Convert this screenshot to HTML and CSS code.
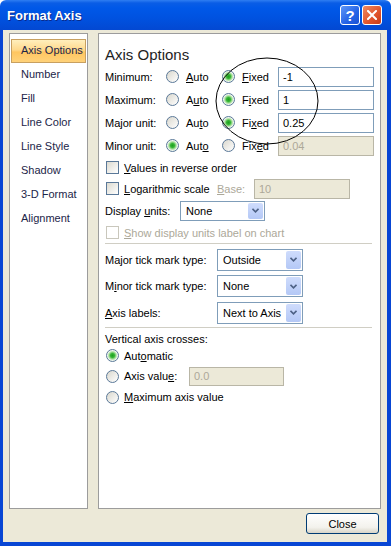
FILE: index.html
```html
<!DOCTYPE html>
<html>
<head>
    <meta charset="UTF-8">
    <title>Format Axis</title>
    <link rel="stylesheet" href="styles.css">
</head>
<body>
<div class="window">
    <div class="titlebar">
        <span class="title">Format Axis</span>
        <div class="title-buttons">
            <span class="tb-btn tb-help">?</span>
            <span class="tb-btn tb-close">
                <svg width="10" height="10" viewBox="0 0 10 10"><path d="M1 1 L9 9 M9 1 L1 9" stroke="#fff" stroke-width="2" stroke-linecap="square"/></svg>
            </span>
        </div>
    </div>

    <div class="client">
        <div class="panes">
            <ul class="nav">
                <li class="active">Axis Options</li>
                <li>Number</li>
                <li>Fill</li>
                <li>Line Color</li>
                <li>Line Style</li>
                <li>Shadow</li>
                <li>3-D Format</li>
                <li>Alignment</li>
            </ul>

            <div class="options">
                <h3>Axis Options</h3>

                <div class="bounds">
                    <span>Minimum:</span>
                    <span class="opt"><span class="radio"></span><u>A</u>uto</span>
                    <span class="opt"><span class="radio on"></span><u>F</u>ixed</span>
                    <span class="field">-1</span>

                    <span>Maximum:</span>
                    <span class="opt"><span class="radio"></span>A<u>u</u>to</span>
                    <span class="opt"><span class="radio on"></span>F<u>i</u>xed</span>
                    <span class="field">1</span>

                    <span>Major unit:</span>
                    <span class="opt"><span class="radio"></span>Au<u>t</u>o</span>
                    <span class="opt"><span class="radio on"></span>Fi<u>x</u>ed</span>
                    <span class="field">0.25</span>

                    <span>Minor unit:</span>
                    <span class="opt"><span class="radio on"></span>Aut<u>o</u></span>
                    <span class="opt"><span class="radio"></span>Fix<u>e</u>d</span>
                    <span class="field off">0.04</span>
                </div>

                <div class="check-row">
                    <span class="box"></span><span><u>V</u>alues in reverse order</span>
                </div>
                <div class="check-row">
                    <span class="box"></span><span class="log-lbl"><u>L</u>ogarithmic scale</span>
                    <span class="base-lbl"><u>B</u>ase:</span>
                    <span class="field off base">10</span>
                </div>
                <div class="units-row">
                    <span class="units-lbl">Display <u>u</u>nits:</span>
                    <span class="select units-sel">None<span class="drop"><svg width="7" height="5" viewBox="0 0 7 5"><path d="M0.5 0.8 L3.5 3.8 L6.5 0.8" fill="none" stroke="#4d6185" stroke-width="1.6"/></svg></span></span>
                </div>
                <div class="check-row disabled">
                    <span class="box"></span><span><u>S</u>how display units label on chart</span>
                </div>

                <div class="sep"></div>

                <div class="tick-row first">
                    <span class="tick-lbl">Ma<u>j</u>or tick mark type:</span>
                    <span class="select tick-sel">Outside<span class="drop"><svg width="7" height="5" viewBox="0 0 7 5"><path d="M0.5 0.8 L3.5 3.8 L6.5 0.8" fill="none" stroke="#4d6185" stroke-width="1.6"/></svg></span></span>
                </div>
                <div class="tick-row short">
                    <span class="tick-lbl">M<u>i</u>nor tick mark type:</span>
                    <span class="select tick-sel">None<span class="drop"><svg width="7" height="5" viewBox="0 0 7 5"><path d="M0.5 0.8 L3.5 3.8 L6.5 0.8" fill="none" stroke="#4d6185" stroke-width="1.6"/></svg></span></span>
                </div>
                <div class="tick-row">
                    <span class="tick-lbl"><u>A</u>xis labels:</span>
                    <span class="select tick-sel">Next to Axis<span class="drop"><svg width="7" height="5" viewBox="0 0 7 5"><path d="M0.5 0.8 L3.5 3.8 L6.5 0.8" fill="none" stroke="#4d6185" stroke-width="1.6"/></svg></span></span>
                </div>

                <div class="sep lower"></div>

                <div class="cross-title">Vertical axis crosses:</div>
                <div class="cross-row auto-row">
                    <span class="radio on"></span><span>Aut<u>o</u>matic</span>
                </div>
                <div class="cross-row value-row">
                    <span class="radio"></span><span class="value-lbl">Axis valu<u>e</u>:</span>
                    <span class="field off value">0.0</span>
                </div>
                <div class="cross-row max-row">
                    <span class="radio"></span><span><u>M</u>aximum axis value</span>
                </div>

                <!-- hand drawn circle round the fixed values -->
                <svg class="mark" width="106" height="90" viewBox="0 0 106 90">
                    <ellipse cx="53" cy="45" rx="51" ry="43" fill="none" stroke="#000" stroke-width="1"/>
                </svg>
            </div>
        </div>

        <div class="footer">
            <button class="btn-close">Close</button>
        </div>
    </div>
</div>
</body>
</html>
```

FILE: styles.css
```css
/* base */
body {
    margin: 0;
    background: #ffffff;
    font-family: "Liberation Sans", Arial, sans-serif;
    font-size: 11px;
    color: #000000;
}

.window {
    width: 391px;
    height: 546px;
    display: flex;
    flex-direction: column;
}

/* title bar */
.titlebar {
    height: 30px;
    flex: none;
    display: flex;
    align-items: center;
    justify-content: space-between;
    padding: 0 9px 0 7px;
    background: linear-gradient(#2f7ef2 0, #0a5de6 3px, #0058e8 8px, #0052e0 60%, #0348d2 100%);
    border-radius: 6px 6px 0 0;
}

.title {
    color: #ffffff;
    font-weight: bold;
    font-size: 13px;
    text-shadow: 1px 1px 0 #0a2a8a;
}

.title-buttons {
    display: flex;
    gap: 2px;
}

.tb-btn {
    width: 20px;
    height: 20px;
    box-sizing: border-box;
    border: 1px solid #ffffff;
    border-radius: 3px;
    display: flex;
    align-items: center;
    justify-content: center;
    color: #ffffff;
    font-weight: bold;
    font-size: 15px;
}

.tb-help {
    background: linear-gradient(135deg, #5d97f7, #2563e6 60%, #1a50d4);
}

.tb-close {
    background: linear-gradient(135deg, #ef8a62, #e0532b 60%, #c63c1a);
}

/* dialog body */
.client {
    flex: 1;
    background: #ece9d8;
    border-left: 3px solid #0846d4;
    border-right: 4px solid #0846d4;
    border-bottom: 4px solid #0846d4;
    padding: 3px 6px 0 6px;
}

.panes {
    display: flex;
    gap: 10px;
    height: 476px;
}

.nav {
    list-style: none;
    margin: 0;
    width: 80px;
    box-sizing: border-box;
    padding: 5px 1px 0 1px;
    background: #ffffff;
    border: 1px solid #9c9c9c;
    color: #1c2548;
}

.nav li {
    height: 24px;
    line-height: 23px;
    padding-left: 10px;
    box-sizing: border-box;
    white-space: nowrap;
}

.nav li.active {
    border: 1px solid #c8a060;
    padding-left: 9px;
    line-height: 21px;
    background: linear-gradient(#ffefbd, #ffd98c 45%, #ffc660 55%, #ffd27a);
}

.options {
    flex: 1;
    position: relative;
    background: #ffffff;
    border: 1px solid #9c9c9c;
    padding: 0 6px;
}

.options h3 {
    margin: 11px 0 0 0;
    font-size: 15px;
    font-weight: normal;
    line-height: 20px;
    color: #1e1e1e;
}

/* min / max / unit grid */
.bounds {
    display: grid;
    grid-template-columns: 61px 56px 56px 96px;
    grid-auto-rows: 23px;
    align-items: center;
}

.opt {
    display: flex;
    align-items: center;
}

.radio {
    flex: none;
    width: 13px;
    height: 13px;
    box-sizing: border-box;
    border: 1px solid #5a7898;
    border-radius: 50%;
    background: linear-gradient(135deg, #d9d7cd, #ffffff);
    margin-right: 7px;
}

.radio.on {
    background: radial-gradient(circle, #1f9d1f 0, #33b533 2px, #9edb92 3.5px, #eef6ec 5px);
}

.field {
    height: 20px;
    box-sizing: border-box;
    border: 1px solid #7f9db9;
    background: #ffffff;
    padding-left: 4px;
    line-height: 18px;
}

.field.off {
    background: #ece9d8;
    border-color: #b9b6a6;
    color: #aca899;
}

/* checkbox rows */
.check-row {
    display: flex;
    align-items: center;
    height: 21px;
    padding-left: 1px;
}

.box {
    flex: none;
    width: 13px;
    height: 13px;
    box-sizing: border-box;
    border: 1px solid #5a7898;
    background: linear-gradient(135deg, #dcdad0, #ffffff);
    margin-right: 5px;
}

.check-row.disabled {
    color: #aca899;
}

.check-row.disabled .box {
    border-color: #c9c7bc;
    background: #ffffff;
}

.log-lbl { width: 93px; }
.base-lbl { width: 37px; color: #aca899; }
.field.base { width: 96px; }

.units-row {
    display: flex;
    align-items: center;
    height: 23px;
}

.units-lbl { width: 75px; }

/* dropdowns */
.select {
    display: flex;
    align-items: center;
    box-sizing: border-box;
    border: 1px solid #7f9db9;
    background: #ffffff;
    padding-left: 5px;
}

.drop {
    margin-left: auto;
    margin-right: 1px;
    width: 15px;
    align-self: stretch;
    margin-top: 1px;
    margin-bottom: 1px;
    background: linear-gradient(#cfdcfc, #b4c8f6);
    border-radius: 2px;
    display: flex;
    align-items: center;
    justify-content: center;
}

.units-sel { width: 85px; height: 20px; }
.tick-sel { width: 86px; height: 22px; }

.sep {
    height: 1px;
    background: #d0cec4;
    margin-right: 2px;
}

.sep.lower { margin-top: 1px; }

.tick-row {
    display: flex;
    align-items: center;
    height: 27px;
}

.tick-row.first { margin-top: 2px; }
.tick-row.short { height: 26px; }

.tick-lbl { width: 112px; }

/* vertical axis crosses */
.cross-title {
    margin-top: 3px;
    height: 16px;
    line-height: 16px;
}

.cross-row {
    display: flex;
    align-items: center;
    padding-left: 1px;
}

.cross-row .radio { margin-right: 5px; }

.auto-row { height: 17px; }
.value-row { height: 24px; }
.max-row { height: 18px; }

.value-lbl { width: 65px; }
.field.value { width: 95px; height: 19px; line-height: 17px; }

.mark {
    position: absolute;
    left: 115px;
    top: 22px;
}

/* footer */
.footer {
    display: flex;
    justify-content: flex-end;
    padding: 4px 2px 0 0;
}

.btn-close {
    width: 73px;
    height: 21px;
    border: 1px solid #003c74;
    border-radius: 3px;
    background: linear-gradient(#ffffff, #f3f2ec 70%, #d8d5c8);
    font-family: "Liberation Sans", Arial, sans-serif;
    font-size: 11px;
    color: #000000;
    padding: 0;
}
```
